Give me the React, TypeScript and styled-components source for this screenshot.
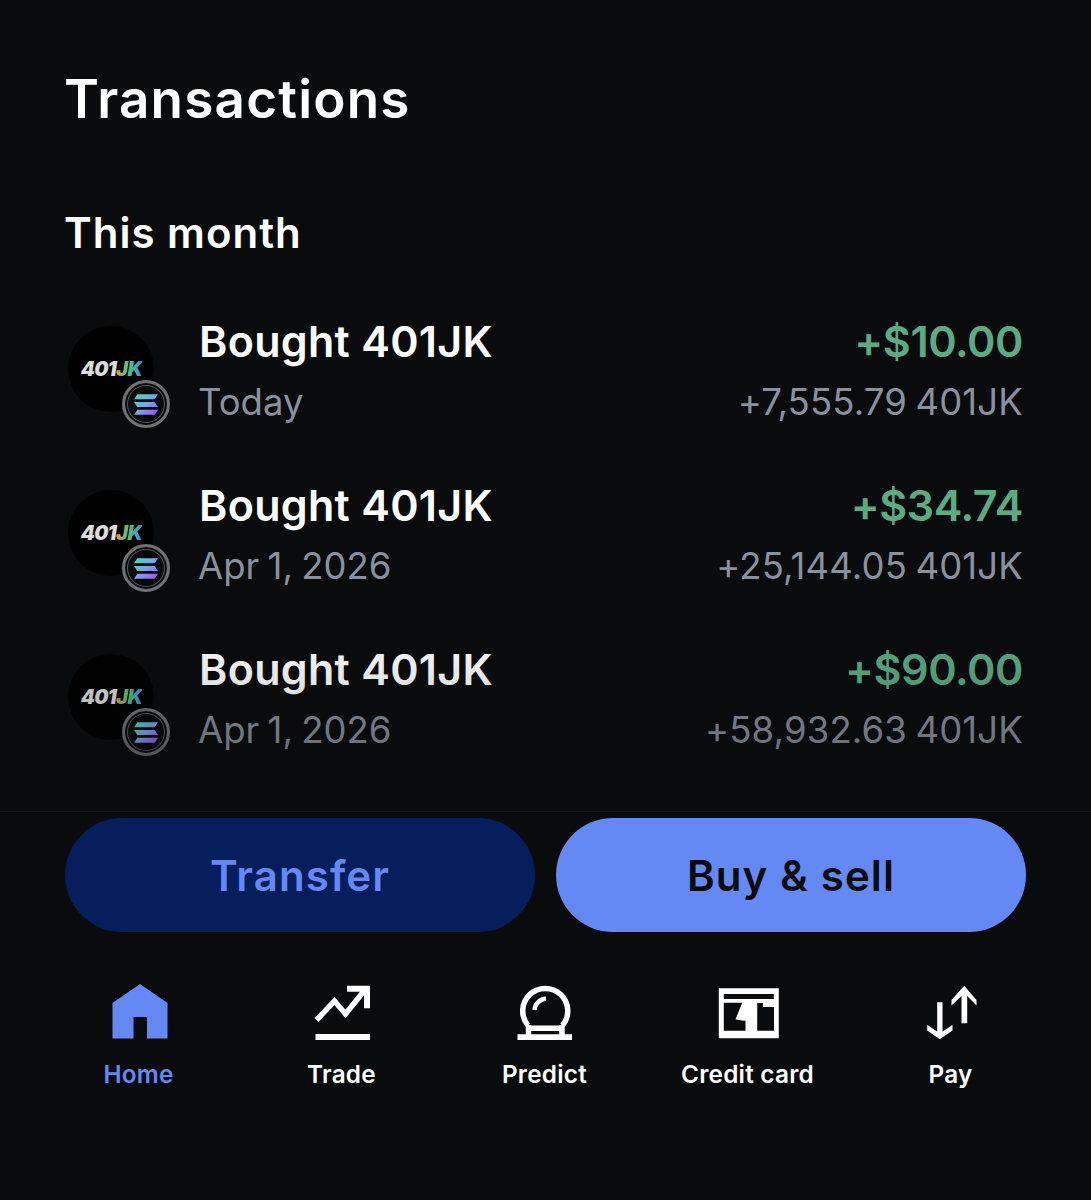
import React from "react";
import styled, { createGlobalStyle } from "styled-components";

const Global = createGlobalStyle`
  html, body { margin: 0; padding: 0; background: #0a0b0d; }
  body { font-family: Inter, "Liberation Sans", sans-serif; color: #fff; -webkit-font-smoothing: antialiased; }
`;

const Page = styled.div`
  width: 1091px;
  height: 1200px;
  background: #0a0b0d;
  display: flex;
  flex-direction: column;
  overflow: hidden;
`;
const Content = styled.main`
  position: relative;
  height: 811px;
  padding: 67px 68px 0 64px;
  box-sizing: border-box;
  flex: none;
`;
const Title = styled.h1`
  margin: 0;
  font-size: 53px;
  line-height: 64px;
  font-weight: 600;
  letter-spacing: 1.2px;
`;
const Section = styled.h2`
  margin: 75px 0 0;
  font-size: 42px;
  line-height: 54px;
  font-weight: 600;
  letter-spacing: 1px;
`;
const List = styled.div`
  margin-top: 53px;
  display: flex;
  flex-direction: column;
`;
const Row = styled.div`
  height: 164px;
  display: flex;
  align-items: flex-start;
`;
const AvatarWrap = styled.div`
  position: relative;
  margin: 13px 0 0 4px;
  width: 86px;
  height: 86px;
  flex: none;
`;
const Avatar = styled.div`
  width: 86px;
  height: 86px;
  border-radius: 50%;
  background: #000;
  display: flex;
  align-items: center;
  justify-content: center;
  font-size: 20px;
  font-weight: 900;
  font-style: italic;
  letter-spacing: -0.6px;
  color: #dcdcdc;
  padding-left: 1px;
  box-sizing: border-box;
`;
const Rainbow = styled.span`
  background: linear-gradient(90deg, #e8a23a 0%, #4fc27a 45%, #3f8fe8 100%);
  -webkit-background-clip: text;
  background-clip: text;
  color: transparent;
`;
const Badge = styled.div`
  position: absolute;
  left: 54px;
  top: 54px;
  width: 48px;
  height: 48px;
  box-sizing: border-box;
  border-radius: 50%;
  background: #08090b;
  border: 3px solid #6f7175;
  box-shadow: inset 0 0 0 2px #0a0b0d, inset 0 0 0 3px #55575b;
  display: flex;
  align-items: center;
  justify-content: center;
`;
const Main = styled.div`
  margin-left: 45px;
  flex: 1;
`;
const Name = styled.div`
  font-size: 43px;
  line-height: 56px;
  font-weight: 600;
  letter-spacing: 0.3px;
  white-space: nowrap;
`;
const Sub = styled.div`
  margin: 5px 0 0 -1px;
  font-size: 36.5px;
  line-height: 56px;
  font-weight: 400;
  word-spacing: -2px;
  color: #8a919e;
  white-space: nowrap;
`;
const Qty = styled(Sub)`
  letter-spacing: 0.15px;
`;
const Right = styled.div`
  text-align: right;
`;
const Amount = styled(Name)`
  color: #5bab84;
  letter-spacing: -0.4px;
`;
const Fade = styled.div`
  position: absolute;
  left: 0;
  right: 0;
  bottom: 0;
  height: 190px;
  background: linear-gradient(180deg, rgba(10,11,13,0) 0%, rgba(10,11,13,0.2) 60%, rgba(10,11,13,0.5) 100%);
  pointer-events: none;
`;
const Footer = styled.footer`
  border-top: 1px solid #17181b;
  padding: 6px 65px 0;
  display: flex;
  flex-direction: column;
`;
const Buttons = styled.div`
  display: grid;
  grid-template-columns: 470px 470px;
  gap: 21px;
`;
const Button = styled.button<{ $primary?: boolean }>`
  height: 114px;
  border: 0;
  border-radius: 57px;
  font-family: inherit;
  font-size: 42px;
  font-weight: 600;
  letter-spacing: 1.1px;
  background: ${(p) => (p.$primary ? "#6489f4" : "#071e5c")};
  color: ${(p) => (p.$primary ? "#0a0b0d" : "#6489f4")};
`;
const Nav = styled.nav`
  margin: 49px -65px 0;
  padding-left: 37px;
  display: grid;
  grid-template-columns: repeat(5, 203px);
`;
const NavItem = styled.div<{ $active?: boolean }>`
  display: flex;
  flex-direction: column;
  align-items: center;
  color: ${(p) => (p.$active ? "#6489f4" : "#fff")};
`;
const NavIcon = styled.svg`
  width: 64px;
  height: 64px;
  display: block;
`;
const NavLabel = styled.span`
  margin-top: 13px;
  font-size: 24.3px;
  line-height: 32px;
  font-weight: 600;
  letter-spacing: 0.25px;
  white-space: nowrap;
`;

const SolanaMark = () => (
  <svg width="24" height="23" viewBox="0 0 28 24">
    <defs>
      <linearGradient id="sol" x1="0" y1="0" x2="1" y2="1">
        <stop offset="0" stopColor="#3fe0b0" />
        <stop offset="0.5" stopColor="#7aa5e8" />
        <stop offset="1" stopColor="#a04cf0" />
      </linearGradient>
    </defs>
    <path fill="url(#sol)" d="M4 0h24l-4 6H0zM0 9h24l4 6H4zM4 18h24l-4 6H0z" />
  </svg>
);

const rows = [
  { date: "Today", amount: "+$10.00", qty: "+7,555.79 401JK" },
  { date: "Apr 1, 2026", amount: "+$34.74", qty: "+25,144.05 401JK" },
  { date: "Apr 1, 2026", amount: "+$90.00", qty: "+58,932.63 401JK" },
];

export default function App() {
  return (
    <Page>
      <Global />
      <Content>
        <Title>Transactions</Title>
        <Section>This month</Section>
        <List>
          {rows.map((r, i) => (
            <Row key={i}>
              <AvatarWrap>
                <Avatar>
                  401<Rainbow>JK</Rainbow>
                </Avatar>
                <Badge>
                  <SolanaMark />
                </Badge>
              </AvatarWrap>
              <Main>
                <Name>Bought 401JK</Name>
                <Sub>{r.date}</Sub>
              </Main>
              <Right>
                <Amount>{r.amount}</Amount>
                <Qty>{r.qty}</Qty>
              </Right>
            </Row>
          ))}
        </List>
        <Fade />
      </Content>
      <Footer>
        <Buttons>
          <Button>Transfer</Button>
          <Button $primary>Buy &amp; sell</Button>
        </Buttons>
        <Nav>
          <NavItem $active>
            <NavIcon viewBox="0 0 64 64">
              <path fill="currentColor" d="M33 3 60.5 22v35.5H40V36H26.5v21.5H5.5V22z" />
            </NavIcon>
            <NavLabel>Home</NavLabel>
          </NavItem>
          <NavItem>
            <NavIcon viewBox="0 0 64 64">
              <path fill="none" stroke="currentColor" strokeWidth="5.5" d="M6.5 39 24.5 20 35.5 33 54 10" />
              <path fill="currentColor" d="M37 4.7h23v22.6h-6V10.7H37z" />
              <path fill="currentColor" d="M5.5 53H60v6H5.5z" />
            </NavIcon>
            <NavLabel>Trade</NavLabel>
          </NavItem>
          <NavItem>
            <NavIcon viewBox="0 0 64 64">
              <path fill="none" stroke="currentColor" strokeWidth="5.5" d="M15 44.4A22.5 22.5 0 1 1 49.5 44.4M15 47.3H49.5M15.5 44V55M49 44V55" />
              <path fill="none" stroke="currentColor" strokeWidth="4.5" d="M21.5 29C22 23 27 18 33 17.5" />
              <path fill="currentColor" d="M4.5 53.3H59V59H4.5z" />
            </NavIcon>
            <NavLabel>Predict</NavLabel>
          </NavItem>
          <NavItem>
            <NavIcon viewBox="0 0 64 64">
              <path
                fill="currentColor"
                fillRule="evenodd"
                d="M2.8 7.3h60v50h-60zM7.8 13v5h50v-5zM7.8 21.7v28h21.7V39.7c-4-0.2-7-0.6-10-1.4l6.7-16.6zM41.2 22v27.7h16.8V26H47v-4z"
              />
            </NavIcon>
            <NavLabel>Credit card</NavLabel>
          </NavItem>
          <NavItem>
            <NavIcon viewBox="0 0 64 64">
              <g transform="translate(1 0)">
                <path fill="currentColor" d="M17.2 21.3h5.3v29.2L32.5 44v5.5L19.8 58.3 7.2 49.5V44l10 6.5z" />
                <path fill="currentColor" d="M44.2 4.7 56.5 19v5.5L47.2 15v27.3h-5.7V15l-10 9.5V19z" />
              </g>
            </NavIcon>
            <NavLabel>Pay</NavLabel>
          </NavItem>
        </Nav>
      </Footer>
    </Page>
  );
}
